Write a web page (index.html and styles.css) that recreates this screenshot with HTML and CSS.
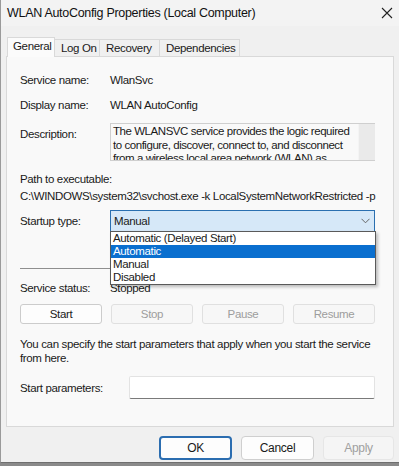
FILE: index.html
```html
<!DOCTYPE html>
<html lang="en">
<head>
    <meta charset="UTF-8">
    <meta name="viewport" content="width=device-width, initial-scale=1.0">
    <title>WLAN AutoConfig Properties (Local Computer)</title>
    <link rel="stylesheet" href="styles.css">
</head>
<body>
    <div class="ventana">
        <div class="barra-titulo">
            <span class="titulo">WLAN AutoConfig Properties (Local Computer)</span>
            <svg class="cerrar" width="12" height="12" viewBox="0 0 12 12">
                <path d="M1 1 L11 11 M11 1 L1 11" stroke="#222" stroke-width="1.1" fill="none"/>
            </svg>
        </div>

        <div class="pestanas">
            <div class="pestana activa">General</div>
            <div class="pestana">Log On</div>
            <div class="pestana">Recovery</div>
            <div class="pestana">Dependencies</div>
        </div>

        <div class="panel">
            <div class="fila">
                <span class="etiqueta">Service name:</span>
                <span>WlanSvc</span>
            </div>
            <div class="fila fila-display">
                <span class="etiqueta">Display name:</span>
                <span>WLAN AutoConfig</span>
            </div>
            <div class="fila fila-desc">
                <span class="etiqueta etiqueta-desc">Description:</span>
                <div class="descripcion">
                    <p class="texto-desc">The WLANSVC service provides the logic required to configure, discover, connect to, and disconnect from a wireless local area network (WLAN) as defined by IEEE 802.11 standards.</p>
                    <div class="scroll"></div>
                </div>
            </div>
            <div class="ruta-etiqueta">Path to executable:</div>
            <div class="ruta">C:\WINDOWS\system32\svchost.exe -k LocalSystemNetworkRestricted -p</div>

            <div class="fila fila-inicio">
                <span class="etiqueta">Startup type:</span>
                <div class="combo-caja">
                    <div class="combo">
                        <span>Manual</span>
                        <svg width="9" height="6" viewBox="0 0 9 6">
                            <path d="M0.5 0.8 L4.5 4.8 L8.5 0.8" stroke="#666" stroke-width="1" fill="none"/>
                        </svg>
                    </div>
                    <ul class="lista">
                        <li>Automatic (Delayed Start)</li>
                        <li class="elegido">Automatic</li>
                        <li>Manual</li>
                        <li>Disabled</li>
                    </ul>
                </div>
            </div>

            <div class="separador"></div>

            <div class="fila fila-estado">
                <span class="etiqueta">Service status:</span>
                <span>Stopped</span>
            </div>

            <div class="botones">
                <button class="boton">Start</button>
                <button class="boton apagado">Stop</button>
                <button class="boton apagado">Pause</button>
                <button class="boton apagado">Resume</button>
            </div>

            <p class="aviso">You can specify the start parameters that apply when you start the service from here.</p>

            <div class="fila fila-param">
                <span class="etiqueta etiqueta-param">Start parameters:</span>
                <div class="entrada"></div>
            </div>
        </div>

        <div class="pie">
            <button class="boton-pie foco">OK</button>
            <button class="boton-pie">Cancel</button>
            <button class="boton-pie apagado">Apply</button>
        </div>
    </div>
</body>
</html>
```

FILE: styles.css
```css
body {
    margin: 0;
    background-color: #8a8a8a;
    font-family: "Liberation Sans", Arial, sans-serif;
    font-size: 11.5px;
    letter-spacing: -0.35px;
    color: #1a1a1a;
}
.ventana {
    width: 399px;
    height: 463px;
    box-sizing: border-box;
    background: #f0f0f0;
    border-left: 1px solid #9a9a9a;
    border-bottom: 1px solid #6f6f6f;
    overflow: hidden;
}
.barra-titulo {
    display: flex;
    align-items: center;
    justify-content: space-between;
    height: 26px;
    padding: 0 6px 0 6px;
    background: #f3f3f3;
}
.titulo {
    font-size: 12.5px;
    letter-spacing: -0.3px;
    color: #111;
}
.pestanas {
    display: flex;
    align-items: flex-end;
    height: 30px;
    padding-left: 6px;
}
.pestana {
    box-sizing: border-box;
    height: 17px;
    line-height: 16px;
    padding: 0 0 0 6px;
    white-space: nowrap;
    border: 1px solid #d9d9d9;
    border-bottom: none;
    border-left: none;
    background: #f0f0f0;
    color: #1a1a1a;
}
.pestana:nth-child(2) { width: 45px; }
.pestana:nth-child(3) { width: 60px; }
.pestana:nth-child(4) { width: 80px; }
.pestana.activa {
    width: 48px;
    height: 20px;
    line-height: 17px;
    padding-left: 5px;
    border-left: 1px solid #d9d9d9;
    background: #fbfbfb;
    margin-bottom: -1px;
    position: relative;
    z-index: 1;
}
.panel {
    margin: 0 5px 0 5px;
    height: 371px;
    box-sizing: border-box;
    padding: 16px 18px 0 13px;
    border: 1px solid #d9d9d9;
    background: #f9f9f9;
}
.fila {
    display: flex;
    align-items: center;
    line-height: 14px;
}
.etiqueta {
    width: 90px;
    flex-shrink: 0;
}
.fila-display {
    margin-top: 11px;
}
.fila-desc {
    margin-top: 11px;
    align-items: flex-start;
}
.etiqueta-desc {
    padding-top: 4px;
}
.descripcion {
    display: flex;
    flex: 1;
    height: 36px;
    border: 1px solid #cfcfcf;
    border-right: none;
    overflow: hidden;
    background: #f9f9f9;
}
.texto-desc {
    flex: 1;
    margin: 0;
    padding: 1px 0 0 2px;
    line-height: 13.5px;
    letter-spacing: -0.45px;
}
.scroll {
    width: 16px;
    flex-shrink: 0;
    background: #eaeaea;
    border-left: 1px solid #f4f4f4;
}
.ruta-etiqueta {
    margin-top: 11px;
    line-height: 14px;
}
.ruta {
    margin-top: 3px;
    line-height: 14px;
    white-space: nowrap;
}
.fila-inicio {
    margin-top: 7px;
}
.combo-caja {
    flex: 1;
    position: relative;
}
.combo {
    display: flex;
    align-items: center;
    justify-content: space-between;
    height: 20px;
    padding: 0 4px 0 3px;
    border: 1px solid #2a6fb0;
    background: #d6e8f8;
}
.lista {
    position: absolute;
    top: 21px;
    left: 0;
    right: -1px;
    margin: 0;
    padding: 0;
    list-style: none;
    background: #ffffff;
    border: 1px solid #5a5a5a;
    box-shadow: 2px 2px 3px rgba(0, 0, 0, 0.25);
    z-index: 2;
}
.lista li {
    height: 13px;
    line-height: 13px;
    padding-left: 2px;
}
.lista li.elegido {
    background: #0a6fcf;
    color: #ffffff;
}
.separador {
    margin-top: 36px;
    height: 1px;
    background: #8f8f8f;
}
.fila-estado {
    margin-top: 12px;
}
.botones {
    display: grid;
    grid-template-columns: repeat(4, 1fr);
    gap: 9px;
    margin-top: 9px;
}
.boton {
    height: 20px;
    padding: 0;
    font-family: inherit;
    font-size: 11.5px;
    letter-spacing: -0.35px;
    color: #1a1a1a;
    background: #fdfdfd;
    border: 1px solid #cccccc;
    border-radius: 3px;
}
.boton.apagado {
    color: #9d9d9d;
    background: #f7f7f7;
    border-color: #e0e0e0;
}
.aviso {
    margin: 13px 0 0 0;
    line-height: 14px;
}
.fila-param {
    margin-top: 11px;
}
.etiqueta-param {
    width: 109px;
}
.entrada {
    flex: 1;
    height: 21px;
    background: #ffffff;
    border: 1px solid #e3e3e3;
    border-bottom: 1px solid #7a7a7a;
    border-radius: 2px;
}
.pie {
    display: flex;
    justify-content: flex-end;
    gap: 9px;
    padding: 9px 5px 0 0;
}
.boton-pie {
    width: 73px;
    height: 24px;
    padding: 0;
    font-family: inherit;
    font-size: 12px;
    letter-spacing: -0.3px;
    color: #1a1a1a;
    background: #fdfdfd;
    border: 1px solid #cfcfcf;
    border-radius: 4px;
}
.boton-pie.foco {
    border: 2px solid #2b6db0;
}
.boton-pie.apagado {
    width: 71px;
    color: #a0a0a0;
    background: #f5f5f5;
    border-color: #e6e6e6;
}
```
